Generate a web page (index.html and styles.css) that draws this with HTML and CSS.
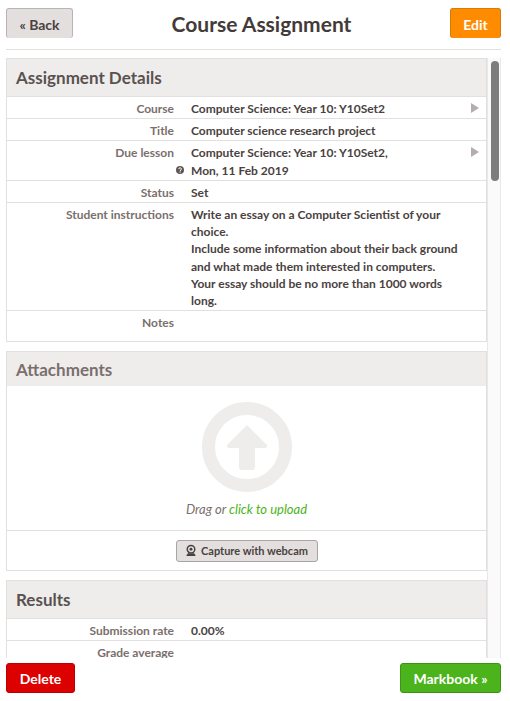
FILE: index.html
```html
<!DOCTYPE html>
<html>

<head>
    <title>Course Assignment</title>
    <link rel="stylesheet" href="styles.css">
</head>

<body>
    <div class="page">
        <div class="topbar">
            <a class="btn btn-back">« Back</a>
            <h1>Course Assignment</h1>
            <a class="btn btn-edit">Edit</a>
        </div>
        <div class="scroller">
            <div class="content">
                <div class="panel">
                    <h2>Assignment Details</h2>
                    <div class="row">
                        <div class="label">Course</div>
                        <div class="value">Computer Science: Year 10: Y10Set2</div>
                        <span class="arrow"></span>
                    </div>
                    <div class="row">
                        <div class="label">Title</div>
                        <div class="value">Computer science research project</div>
                    </div>
                    <div class="row">
                        <div class="label">Due lesson
                            <div class="help-line">
                                <svg class="help" viewBox="0 0 16 16">
                                    <circle cx="8" cy="8" r="8" fill="#5f5654" />
                                    <path d="M5.2 6.2 C5.2 2.9 10.9 2.9 10.9 6 C10.9 8 8.2 7.9 8.2 10" fill="none"
                                        stroke="#fff" stroke-width="2" />
                                    <rect x="7.1" y="11" width="2.2" height="2.2" fill="#fff" />
                                </svg>
                            </div>
                        </div>
                        <div class="value">Computer Science: Year 10: Y10Set2,<br>Mon, 11 Feb 2019</div>
                        <span class="arrow"></span>
                    </div>
                    <div class="row">
                        <div class="label">Status</div>
                        <div class="value">Set</div>
                    </div>
                    <div class="row">
                        <div class="label">Student instructions</div>
                        <div class="value">Write an essay on a Computer Scientist of your choice.<br>Include some
                            information about their back ground and what made them interested in computers.<br>Your
                            essay should be no more than 1000 words long.</div>
                    </div>
                    <div class="row row-notes">
                        <div class="label">Notes</div>
                        <div class="value"></div>
                    </div>
                </div>
                <div class="panel">
                    <h2 class="flush">Attachments</h2>
                    <div class="upload">
                        <svg class="upload-icon" viewBox="0 0 90 90">
                            <circle cx="45" cy="45" r="38.5" fill="none" stroke="#eeedec" stroke-width="13" />
                            <path d="M45 23 L65 43 Q66 46 63 46 H53 V65 Q53 68 50 68 H40 Q37 68 37 65 V46 H27 Q24 46 25 43 Z"
                                fill="#eeedec" />
                        </svg>
                        <div class="upload-text">Drag or <a>click to upload</a></div>
                    </div>
                    <div class="webcam-row">
                        <a class="btn-webcam">
                            <svg class="webcam" viewBox="0 0 14 14">
                                <circle cx="7" cy="5.5" r="4.4" fill="none" stroke="#4a4240" stroke-width="1.7" />
                                <circle cx="7" cy="5.5" r="1.7" fill="#4a4240" />
                                <path d="M3.8 9.8 Q2 11.5 1.5 13.5 H12.5 Q12 11.5 10.2 9.8 Q7 11.4 3.8 9.8 Z" fill="#4a4240" />
                            </svg>
                            Capture with webcam
                        </a>
                    </div>
                </div>
                <div class="panel">
                    <h2>Results</h2>
                    <div class="row">
                        <div class="label">Submission rate</div>
                        <div class="value">0.00%</div>
                    </div>
                    <div class="row">
                        <div class="label">Grade average</div>
                        <div class="value"></div>
                    </div>
                </div>
            </div>
            <div class="scrollbar">
                <div class="thumb"></div>
            </div>
        </div>
        <div class="bottombar">
            <a class="btn btn-delete">Delete</a>
            <a class="btn btn-markbook">Markbook »</a>
        </div>
    </div>
</body>

</html>
```

FILE: styles.css
```css
html,
body {
    width: 100%;
    height: 100%;
    overflow: hidden;
    margin: 0;
    padding: 0;
}

body {
    background-color: white;
    color: #4a4240;
    font-family: "Lato", "Noto Sans", sans-serif;
    font-size: 12px;
}

.page {
    display: flex;
    flex-direction: column;
    height: 701px;
    box-sizing: border-box;
    padding: 8px 9px 8px 6px;
}

.topbar {
    display: flex;
    align-items: flex-start;
    justify-content: space-between;
    height: 41px;
    flex: none;
    border-bottom: 1px solid #e2e0df;
    margin-bottom: 8px;
}

.topbar h1 {
    margin: 0;
    font-size: 21px;
    line-height: 32px;
    font-weight: 700;
    color: #433b39;
}

.btn {
    display: block;
    box-sizing: border-box;
    height: 30px;
    line-height: 30px;
    font-size: 14px;
    font-weight: 700;
    text-align: center;
    border-radius: 3px;
}

.btn-back {
    width: 67px;
    background: #e3dfde;
    color: #4a4240;
    border: 1px solid #b9b4b2;
    border-bottom: 0;
    line-height: 32px;
}

.btn-edit {
    width: 51px;
    background: #ff8c00;
    color: white;
    border: 1px solid #d97a05;
    border-bottom: 0;
    line-height: 32px;
}

.scroller {
    display: flex;
    flex: 1;
    min-height: 0;
}

.content {
    flex: none;
    width: 481px;
    overflow: hidden;
}

.panel {
    border: 1px solid #e2e0df;
    margin-bottom: 9px;
}

.panel h2 {
    margin: 0;
    background: #eeedec;
    border-bottom: 1px solid #e2e0df;
    font-size: 17px;
    line-height: 37px;
    font-weight: 700;
    padding-left: 9px;
    color: #5a5250;
}

.panel h2.flush {
    padding-top: 2px;
    line-height: 32px;
    border-bottom: 0;
    color: #7a6f6c;
}

.row {
    display: flex;
    position: relative;
    border-bottom: 1px solid #e2e0df;
    padding: 3px 0 1px;
    line-height: 17.2px;
}

.panel .row:last-child {
    border-bottom: 0;
}

.row-notes {
    padding-bottom: 9.6px;
}

.label {
    flex: none;
    width: 167px;
    text-align: right;
    font-weight: 700;
    color: #7a6f6c;
}

.help-line {
    height: 17px;
    display: flex;
    justify-content: flex-end;
    align-items: center;
    margin-right: -10px;
}

.help {
    width: 8px;
    height: 8px;
}

.value {
    flex: none;
    width: 268px;
    margin-left: 17px;
    font-weight: 700;
    color: #4a4240;
}

.arrow {
    position: absolute;
    right: 7px;
    top: 6px;
    border-left: 8px solid #b3aeac;
    border-top: 5px solid transparent;
    border-bottom: 5px solid transparent;
}

.upload {
    display: flex;
    flex-direction: column;
    align-items: center;
    height: 144px;
    border-bottom: 1px solid #e2e0df;
}

.upload-icon {
    width: 90px;
    height: 90px;
    margin-top: 16px;
}

.upload-text {
    margin-top: 9px;
    font-style: italic;
    font-size: 13px;
    color: #7a6f6c;
}

.upload-text a {
    color: #4bb31c;
}

.webcam-row {
    display: flex;
    justify-content: center;
    align-items: center;
    height: 39px;
}

.btn-webcam {
    display: flex;
    align-items: center;
    justify-content: center;
    gap: 4px;
    box-sizing: border-box;
    width: 142px;
    height: 22px;
    background: #e3dfde;
    border: 1px solid #a9a4a2;
    border-radius: 3px;
    font-weight: 700;
    font-size: 11px;
}

.webcam {
    width: 12px;
    height: 13px;
}

.scrollbar {
    flex: none;
    width: 14px;
    box-sizing: border-box;
    padding: 3px 3px;
    background: #fafafa;
    border-left: 1px solid #e8e8e8;
    border-right: 1px solid #e8e8e8;
}

.thumb {
    width: 8px;
    height: 120px;
    border-radius: 4px;
    background: #7d7d7d;
}

.bottombar {
    display: flex;
    justify-content: space-between;
    flex: none;
    margin-top: 5px;
}

.btn-delete {
    width: 69px;
    background: #dd0000;
    color: white;
    border: 1px solid #b80000;
}

.btn-markbook {
    width: 101px;
    background: #4bb31c;
    color: white;
    border: 1px solid #3d9316;
}
```
